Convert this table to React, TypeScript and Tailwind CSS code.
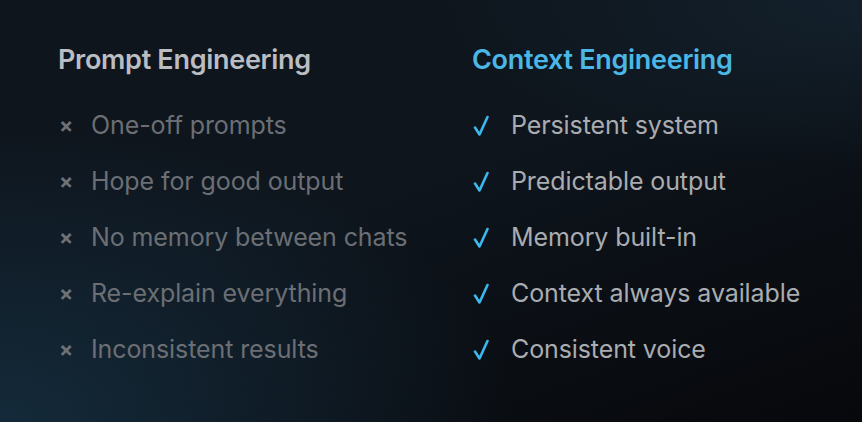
const bad = [
	"One-off prompts",
	"Hope for good output",
	"No memory between chats",
	"Re-explain everything",
	"Inconsistent results",
];

const good = [
	"Persistent system",
	"Predictable output",
	"Memory built-in",
	"Context always available",
	"Consistent voice",
];

function Check() {
	return <svg width="16" height="22" viewBox="0 0 16 22" fill="none" className="text-[#3db8ec]">
		<path d="M2 12.5 L6.5 19.5 L14.5 2" stroke="currentColor" strokeWidth="2.6" strokeLinecap="round" strokeLinejoin="round" />
	</svg>
}

function Row(props: { mark: "x" | "check", text: string }) {
	const { mark, text } = props;
	return <li className="flex h-[56px] items-center">
		{mark === "x"
			? <span className="w-[33px] pl-[1px] text-[21px] font-bold text-[#6d7277]">×</span>
			: <span className="flex w-[39px] items-center pl-[1px]"><Check /></span>}
		<span className={mark === "x" ? "text-[25px] tracking-[-0.1px] text-[#6b6f74]" : "text-[25px] tracking-[-0.1px] text-[#a9acb0]"}>{text}</span>
	</li>
}

export default function App() {
	return <div className="h-[422px] w-[862px] overflow-hidden bg-[linear-gradient(160deg,#0f151d_0%,#0e151d_45%,#07080b_100%)] font-['Inter',sans-serif]">
		<div className="h-full w-full bg-[radial-gradient(ellipse_60%_70%_at_0%_100%,#142a3a_0%,transparent_100%)]">
			<div className="flex h-full w-full bg-[radial-gradient(ellipse_50%_40%_at_100%_0%,#13202b_0%,transparent_100%)] pl-[58px] pt-[41px]">
				<div className="w-[414px]">
					<h2 className="h-[37px] text-[27px] font-semibold leading-[37px] tracking-[-0.3px] text-[#babdc2]">Prompt Engineering</h2>
					<ul className="mt-[20px]">
						{bad.map(t => <Row key={t} mark="x" text={t} />)}
					</ul>
				</div>
				<div>
					<h2 className="h-[37px] text-[27px] font-semibold leading-[37px] tracking-[-0.3px] text-[#4bb7e6]">Context Engineering</h2>
					<ul className="mt-[20px]">
						{good.map(t => <Row key={t} mark="check" text={t} />)}
					</ul>
				</div>
			</div>
		</div>
	</div>
}
